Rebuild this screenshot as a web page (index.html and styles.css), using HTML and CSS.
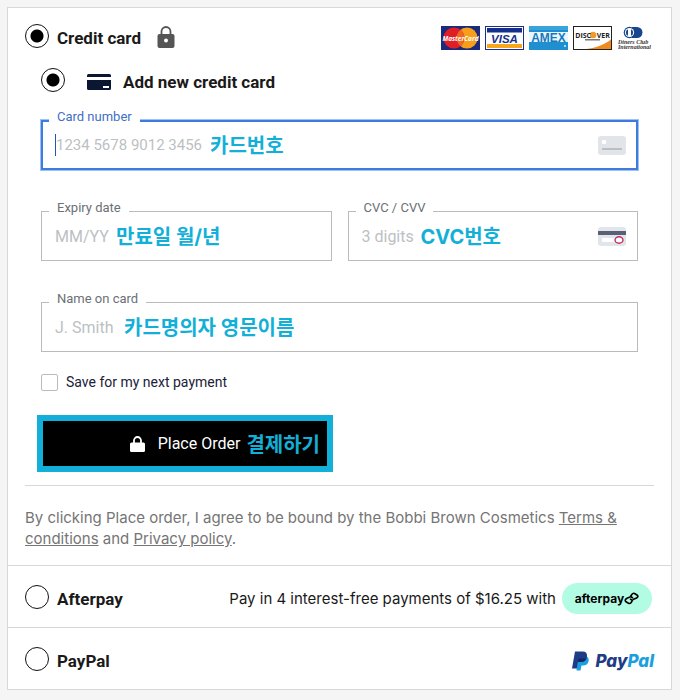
FILE: index.html
```html
<!DOCTYPE html>
<html lang="en">
<head>
	<meta charset="UTF-8">
	<meta name="viewport" content="width=device-width, initial-scale=1.0">
	<title>Payment</title>
	<link rel="stylesheet" href="styles.css">
</head>
<body>

	<form class="payment">

		<section class="method">
			<div class="method__head">
				<input class="radio" type="radio" name="method" id="credit" checked>
				<label class="method__name" for="credit">Credit card</label>
				<svg class="lock" width="18" height="22" viewBox="0 0 18 22">
					<path d="M4.5 9V5.5a4.5 4.5 0 0 1 9 0V9" fill="none" stroke="#555" stroke-width="1.8"/>
					<rect x="0.5" y="8" width="17" height="14" rx="2" fill="#555"/>
					<circle cx="9" cy="14.5" r="2" fill="#fff"/>
				</svg>

				<div class="brands">
					<!-- mastercard -->
					<svg width="39" height="24" viewBox="0 0 39 24">
						<rect width="39" height="24" fill="#1b2a7a"/>
						<circle cx="26" cy="12" r="10.5" fill="#f79f1a"/>
						<circle cx="13" cy="12" r="10.5" fill="#e01e26"/>
						<path d="M19.5 3.8a10.5 10.5 0 0 1 0 16.4a10.5 10.5 0 0 1 0-16.4" fill="#ee6a20"/>
						<text x="19.5" y="14.5" class="brand-text" font-size="6.5" font-style="italic" text-anchor="middle" fill="#fff">MasterCard</text>
					</svg>
					<!-- visa -->
					<svg width="39" height="24" viewBox="0 0 39 24">
						<rect x="0.5" y="0.5" width="38" height="23" fill="#fff" stroke="#1c2f87"/>
						<rect x="2" y="2" width="35" height="4.5" fill="#14308c"/>
						<rect x="2" y="18" width="35" height="4" fill="#f5a81c"/>
						<text x="19.5" y="16.5" class="brand-text brand-text--wide" font-size="11.5" font-style="italic" text-anchor="middle" fill="#14308c">VISA</text>
					</svg>
					<!-- amex -->
					<svg width="39" height="24" viewBox="0 0 39 24">
						<rect width="39" height="24" fill="#1f8fd0"/>
						<rect y="6" width="39" height="10" fill="#e9f6fd"/>
						<rect width="39" height="4" fill="#3aa3dc"/>
						<text x="19.5" y="15.5" class="brand-text brand-text--wide" font-size="12" text-anchor="middle" fill="#1779bd">AMEX</text>
						<circle cx="36" cy="20" r="1" fill="#d5eefa"/>
					</svg>
					<!-- discover -->
					<svg width="39" height="24" viewBox="0 0 39 24">
						<rect x="0.5" y="0.5" width="38" height="23" fill="#fff" stroke="#222"/>
						<path d="M38 13.5V23H13c11-1 19-5 25-9.5z" fill="#f08a1d"/>
						<circle cx="20" cy="9" r="3.2" fill="#f39a2d"/>
						<text x="19.5" y="11.5" class="brand-text" font-size="7" text-anchor="middle" fill="#222">DISC<tspan fill="#f39a2d">O</tspan>VER</text>
						<rect x="12" y="13" width="15" height="1.5" fill="#777"/>
					</svg>
					<!-- diners -->
					<svg width="37" height="24" viewBox="0 0 37 24">
						<path d="M15 1h5a5.5 5.5 0 0 1 0 11h-5z" fill="#17468f"/>
						<circle cx="12.5" cy="6.5" r="5.8" fill="#17468f"/>
						<circle cx="12.500" cy="6.5" r="4.6" fill="#fff"/>
						<path d="M11 3.2a3.6 3.6 0 0 0 0 6.6zM14 3.2a3.6 3.6 0 0 1 0 6.6z" fill="#17468f"/>
						<text x="1" y="18" class="diners-text" font-size="6">Diners Club</text>
						<text x="1" y="23" class="diners-text" font-size="6">International</text>
					</svg>
				</div>
			</div>

			<div class="card-form">
				<div class="card-form__head">
					<input class="radio" type="radio" name="card" id="new-card" checked>
					<svg class="card-icon" width="24" height="16" viewBox="0 0 24 16">
						<path d="M1.5 0h21A1.5 1.5 0 0 1 24 1.5V3H0V1.5A1.5 1.5 0 0 1 1.5 0zM0 6h24v8.5a1.5 1.5 0 0 1-1.5 1.5h-21A1.5 1.5 0 0 1 0 14.5z" fill="#0b1730"/>
						<rect x="16" y="12" width="6" height="2" fill="#fff"/>
					</svg>
					<label class="method__name" for="new-card">Add new credit card</label>
				</div>

				<div class="fields">
					<div class="field field--wide field--active">
						<label class="field__label" for="number">Card number</label>
						<input class="field__input field__input--number" type="text" id="number" placeholder="1234 5678 9012 3456">
						<span class="note" lang="ko">카드번호</span>
						<svg class="field__icon" width="28" height="19" viewBox="0 0 28 19">
							<rect width="28" height="19" rx="3" fill="#e1e5e9"/>
							<rect x="4" y="4" width="4" height="4" rx="1" fill="#fff"/>
							<rect x="4" y="12" width="20" height="2" fill="#b9bfc5"/>
						</svg>
					</div>

					<div class="field">
						<label class="field__label" for="expiry">Expiry date</label>
						<input class="field__input field__input--expiry" type="text" id="expiry" placeholder="MM/YY">
						<span class="note" lang="ko">만료일 월/년</span>
					</div>

					<div class="field">
						<label class="field__label" for="cvc">CVC / CVV</label>
						<input class="field__input field__input--cvc" type="text" id="cvc" placeholder="3 digits">
						<span class="note" lang="ko">CVC번호</span>
						<svg class="field__icon" width="28" height="19" viewBox="0 0 28 19">
							<rect width="28" height="19" rx="3" fill="#e1e5ec"/>
							<rect y="4" width="28" height="4" fill="#5b6172"/>
							<rect x="4" y="11" width="13" height="4" fill="#fff"/>
							<ellipse cx="21" cy="13" rx="4" ry="3.2" fill="#fff" stroke="#c0305f" stroke-width="1.4"/>
						</svg>
					</div>

					<div class="field field--wide">
						<label class="field__label" for="holder">Name on card</label>
						<input class="field__input field__input--holder" type="text" id="holder" placeholder="J. Smith">
						<span class="note" lang="ko">카드명의자 영문이름</span>
					</div>
				</div>

				<div class="save">
					<input class="checkbox" type="checkbox" id="save">
					<label for="save">Save for my next payment</label>
				</div>

				<button class="order" type="button">
					<svg width="15" height="16" viewBox="0 0 15 16">
						<path d="M4 7V4.5a3.5 3.5 0 0 1 7 0V7" fill="none" stroke="#fff" stroke-width="1.8"/>
						<rect y="6.5" width="15" height="9.5" rx="1.5" fill="#fff"/>
					</svg>
					<span class="order__text">Place Order</span>
					<span class="note" lang="ko">결제하기</span>
				</button>
			</div>

			<p class="terms">By clicking Place order, I agree to be bound by the Bobbi Brown Cosmetics <a href="#">Terms &amp; conditions</a> and <a href="#">Privacy policy</a>.</p>
		</section>

		<section class="method method--row">
			<input class="radio" type="radio" name="method" id="afterpay">
			<label class="method__name" for="afterpay">Afterpay</label>
			<span class="method__info">Pay in 4 interest-free payments of $16.25 with</span>
			<span class="afterpay">
				afterpay
				<svg width="15" height="13" viewBox="0 0 15 13">
					<path d="M6 5L3 6.200Q0 8 2 9.800L4.500 11.300Q6 12 7.200 10.500L8.500 8.200L6 7M9 7.500L12.500 6Q15 4.500 13 3L10.500 1.500Q9 0.800 7.800 2.500L6.500 4.500L9 6" fill="none" stroke="#000" stroke-width="1.600" stroke-linejoin="round"/>
				</svg>
			</span>
		</section>

		<section class="method method--row">
			<input class="radio" type="radio" name="method" id="paypal">
			<label class="method__name" for="paypal">PayPal</label>
			<span class="paypal">
				<svg width="17" height="20" viewBox="0 0 17 20">
					<path d="M6 5h8.500q3 2 2 5.500Q15.500 14.500 11 14.500H9.500L8.500 19.500H4.500z" fill="#1a9fe0"/>
					<path d="M3 0.500h7.500q5 0 4.500 5Q14 11 8.500 11H6L4.800 17.500H0z" fill="#1f3c86"/>
					<path d="M6.500 7.500h8.200Q13 11 8.500 11H6z" fill="#152766"/>
				</svg>
				<span class="paypal__text">Pay<span class="paypal__pal">Pal</span></span>
			</span>
		</section>

	</form>

</body>
</html>
```
FILE: styles.css
```css
* {
    margin: 0;
    padding: 0;
    box-sizing: border-box;
}

body {
    padding: 7px 8px 7px 7px;
    background: #f5f5f5;
    color: #1a1a1a;
    font-family: Roboto, "Noto Sans CJK KR", sans-serif;
    font-size: 15px;
}

.payment {
    background: #fff;
    border: 1px solid #d8d8d8;
}

.method {
    padding: 16px 17px;
}

.method + .method {
    border-top: 1px solid #d8d8d8;
}

.method__head,
.card-form__head,
.method--row {
    display: flex;
    align-items: center;
}

.method__head {
    height: 28px;
}

.method--row {
    height: 62px;
    padding: 4px 17px 0;
}

.method__name {
    margin-left: 8px;
    font-size: 17px;
    font-weight: 700;
    line-height: 20px;
}

.method__info {
    margin-left: auto;
    font-family: Inter, sans-serif;
}

/* radios */
.radio {
    appearance: none;
    width: 24px;
    height: 24px;
    margin-bottom: 4px;
    border: 1px solid #111;
    border-radius: 50%;
    background: #fff;
}

.radio:checked {
    background: radial-gradient(circle, #000 6px, #fff 7px);
}

.lock {
    margin: 0 0 3px 16px;
}

.brands {
    display: flex;
    gap: 5px;
    margin-left: auto;
}

.brand-text {
    font-family: "Open Sans", sans-serif;
    font-weight: 700;
}

.brand-text--wide {
    font-family: "Liberation Sans", sans-serif;
}

.diners-text {
    font-family: "Liberation Serif", serif;
    font-style: italic;
    font-weight: 700;
    fill: #333;
}

/* card form */
.card-form {
    padding: 16px 16px 13px;
    border-bottom: 1px solid #d8d8d8;
}

.card-form__head {
    height: 28px;
}

.card-icon {
    margin: 0 4px 0 22px;
}

.fields {
    display: grid;
    grid-template-columns: 1fr 1fr;
    gap: 41px 16px;
    margin-top: 24px;
}

.field {
    position: relative;
    display: flex;
    align-items: center;
    height: 50px;
    padding: 0 11px 0 13px;
    border: 1px solid #bbb;
}

.field--wide {
    grid-column: 1 / 3;
}

.field--active {
    border-color: #3f7bdc;
    box-shadow: inset 0 0 0 1px #3f7bdc, 0 0 0 1px #9cc3f7;
}

.field__label {
    position: absolute;
    top: -12px;
    left: 7px;
    padding: 0 8px;
    background: #fff;
    color: #6b7075;
    font-size: 13px;
    line-height: 16px;
}

.field--active .field__label {
    color: #3f6fc4;
}

.field__input {
    height: 22px;
    border: 0;
    outline: 0;
    background: transparent;
    color: #333;
    font-family: inherit;
    font-size: 16px;
}

.field__input::placeholder {
    color: #bcbfc3;
    font-weight: 400;
}

.field--active .field__input {
    border-left: 1px solid #2456b0;
    font-size: 15px;
}

.field__input--number {
    width: 155px;
}

.field__input--expiry {
    width: 61px;
}

.field__input--cvc {
    width: 59px;
}

.field__input--holder {
    width: 69px;
}

.field__icon {
    margin-left: auto;
}

.note {
    padding-top: 2px;
    color: #12b0d8;
    font-family: Inter, "Noto Sans CJK KR", sans-serif;
    font-size: 20px;
    font-weight: 700;
    line-height: 24px;
}

.save {
    display: flex;
    align-items: center;
    gap: 8px;
    margin-top: 21px;
    color: #1a2238;
    font-size: 14px;
    line-height: 18px;
}

.checkbox {
    appearance: none;
    width: 17px;
    height: 17px;
    border: 1px solid #bbb;
    border-radius: 2px;
    background: #fff;
}

.order {
    display: flex;
    align-items: center;
    justify-content: flex-end;
    width: 296px;
    height: 57px;
    margin: 24px 0 0 -4px;
    padding-right: 7px;
    border: 6px solid #12b0d8;
    background: #000;
    color: #fff;
    font-family: inherit;
    font-size: 16px;
}

.order__text {
    margin: 0 6px 0 13px;
}

.terms {
    margin-top: 21px;
    color: #757575;
    font-family: Inter, sans-serif;
    line-height: 21px;
}

.terms a {
    color: inherit;
}

/* logos */
.afterpay {
    display: flex;
    align-items: center;
    justify-content: center;
    width: 90px;
    height: 31px;
    margin: 0 2px 0 6px;
    border-radius: 16px;
    background: #b2fce4;
    color: #000;
    font-family: Inter, sans-serif;
    font-size: 12px;
    font-weight: 700;
}

.paypal {
    display: flex;
    align-items: center;
    gap: 6px;
    margin-left: auto;
}

.paypal__text {
    color: #1f3c86;
    font-family: Inter, sans-serif;
    font-size: 17px;
    font-style: italic;
    font-weight: 800;
}

.paypal__pal {
    color: #1a9fe0;
}
```
